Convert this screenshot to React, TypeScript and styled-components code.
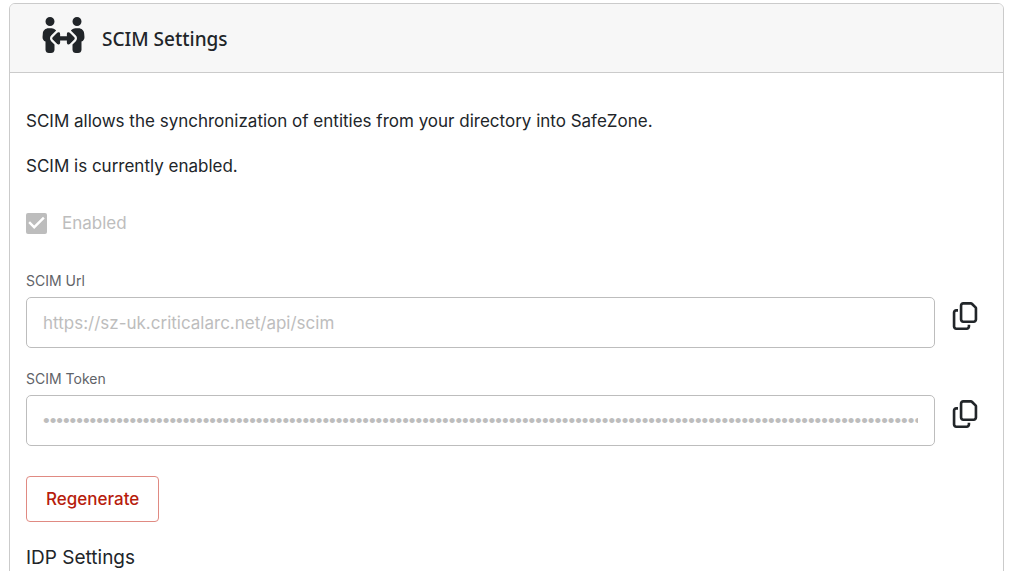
import React, { useId } from "react";
import styled, { createGlobalStyle } from "styled-components";
import { FaPeopleArrows, FaRegCopy } from "react-icons/fa6";

const GlobalStyle = createGlobalStyle`
  *, *::before, *::after { box-sizing: border-box; }
  html { scrollbar-width: none; }
  body {
    margin: 0;
    background: #fff;
    color: #212529;
    font: 400 17px/24px Inter, "Liberation Sans", sans-serif;
  }
`;

const Page = styled.main`
  padding: 3px 8px 8px 9px;
`;

const Card = styled.section`
  border: 1px solid #cbcbcb;
  border-radius: 6px;
  overflow: hidden;
`;

const CardHeader = styled.header`
  display: flex;
  align-items: center;
  gap: 16px;
  height: 69px;
  padding: 0 31px;
  background: #f7f7f7;
  border-bottom: 1px solid #cbcbcb;
`;

const HeaderIcon = styled(FaPeopleArrows)`
  flex: none;
  width: 45px;
  height: 36px;
  margin-bottom: 6px;
`;

const Title = styled.h1`
  margin: 0;
  padding-top: 2px;
  font: 500 19px/28px "Noto Sans", "Open Sans", sans-serif;
`;

const CardBody = styled.div`
  display: flex;
  flex-direction: column;
  align-items: stretch;
  padding: 36px 16px 40px;
`;

const Paragraph = styled.p`
  margin: 0 0 21px;
`;

const CheckLabel = styled.label`
  display: flex;
  align-items: center;
  gap: 15px;
  margin: 12px 0 36px;
  color: #bdbdbd;
`;

const Checkbox = styled.input`
  appearance: none;
  display: grid;
  width: 21px;
  height: 21px;
  margin: 0;
  border-radius: 2px;
  background: #bdbdbd;
  &:checked::after {
    content: "";
    background: #fff;
    clip-path: polygon(39% 78%, 11% 50%, 19% 42%, 39% 62%, 81% 20%, 89% 28%);
  }
`;

const Field = styled.div`
  margin-bottom: 21px;
`;

const FieldLabel = styled.label`
  display: block;
  margin-bottom: 6px;
  color: #5f6368;
  font-size: 14px;
  line-height: 20px;
`;

const FieldRow = styled.div`
  display: flex;
  align-items: flex-start;
  gap: 16px;
  padding-right: 8px;
`;

const TextInput = styled.input`
  flex: 1;
  min-width: 0;
  height: 51px;
  padding: 0 16px;
  border: 1px solid #bdbdbd;
  border-radius: 5px;
  background: #fff;
  color: #bdbdbd;
  font: inherit;
  &[type="password"] { font-family: "Liberation Sans", sans-serif; font-size: 19px; }
`;

const CopyButton = styled.button`
  display: grid;
  place-items: center;
  width: 28px;
  height: 38px;
  padding: 0;
  border: 0;
  background: none;
  color: #212529;
`;

const DangerButton = styled.button`
  align-self: flex-start;
  height: 46px;
  margin: 9px 0 22px;
  padding: 0 19px;
  border: 1px solid #e08a82;
  border-radius: 4px;
  background: #fff;
  color: #b71c0c;
  font: inherit;
  font-weight: 500;
`;

const SectionTitle = styled.h2`
  margin: 0;
  font-size: 19px;
  font-weight: 400;
  line-height: 28px;
`;

type CopyFieldProps = { label: string; value: string; type?: "text" | "password" };

function CopyField({ label, value, type = "text" }: CopyFieldProps) {
  const id = useId();
  return (
    <Field>
      <FieldLabel htmlFor={id}>{label}</FieldLabel>
      <FieldRow>
        <TextInput id={id} type={type} value={value} disabled readOnly />
        <CopyButton type="button" aria-label={`Copy ${label}`}>
          <FaRegCopy size={28} />
        </CopyButton>
      </FieldRow>
    </Field>
  );
}

export default function App() {
  return (
    <>
      <GlobalStyle />
      <Page>
        <Card>
          <CardHeader>
            <HeaderIcon />
            <Title>SCIM Settings</Title>
          </CardHeader>
          <CardBody>
            <Paragraph>
              SCIM allows the synchronization of entities from your directory into SafeZone.
            </Paragraph>
            <Paragraph>SCIM is currently enabled.</Paragraph>
            <CheckLabel>
              <Checkbox type="checkbox" defaultChecked disabled />
              Enabled
            </CheckLabel>
            <CopyField label="SCIM Url" value="https://sz-uk.criticalarc.net/api/scim" />
            <CopyField label="SCIM Token" type="password" value={"x".repeat(180)} />
            <DangerButton type="button">Regenerate</DangerButton>
            <SectionTitle>IDP Settings</SectionTitle>
          </CardBody>
        </Card>
      </Page>
    </>
  );
}
